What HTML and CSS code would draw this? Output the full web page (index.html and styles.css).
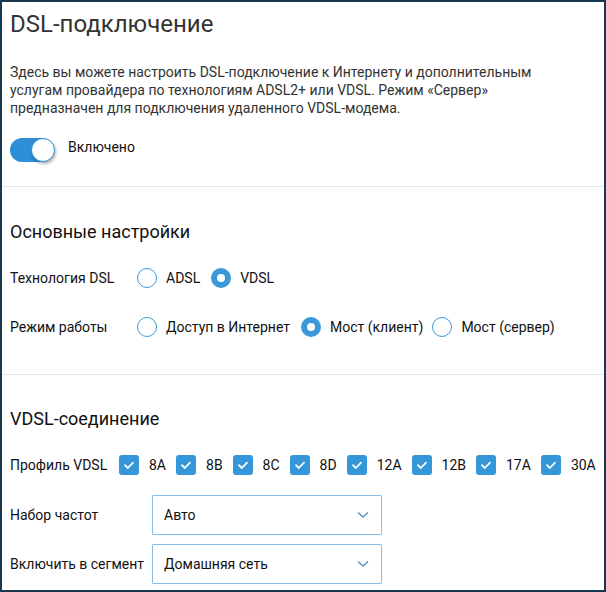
FILE: index.html
```html
<!DOCTYPE html>
<html lang="ru">
<head>
<meta charset="utf-8">
<link rel="stylesheet" href="styles.css">
</head>
<body>
<div class="frame">
  <section class="intro">
    <h1 class="title">DSL-подключение</h1>
    <p class="desc">Здесь вы можете настроить DSL-подключение к Интернету и дополнительным<br>услугам провайдера по технологиям ADSL2+ или VDSL. Режим «Сервер»<br>предназначен для подключения удаленного VDSL-модема.</p>
    <div class="switch-row">
      <span class="switch"><span class="knob"></span></span>
      <span class="switch-label">Включено</span>
    </div>
  </section>
  <section class="sec sec-basic">
    <h2 class="sec-title">Основные настройки</h2>
    <div class="row row-tech">
      <span class="row-label w-basic">Технология DSL</span>
      <span class="opt"><span class="radio"></span><span class="opt-text">ADSL</span></span>
      <span class="opt"><span class="radio on"></span><span class="opt-text">VDSL</span></span>
    </div>
    <div class="row row-mode">
      <span class="row-label w-basic">Режим работы</span>
      <span class="opt"><span class="radio"></span><span class="opt-text">Доступ в Интернет</span></span>
      <span class="opt"><span class="radio on"></span><span class="opt-text">Мост (клиент)</span></span>
      <span class="opt"><span class="radio"></span><span class="opt-text">Мост (сервер)</span></span>
    </div>
  </section>
  <section class="sec sec-vdsl">
    <h2 class="sec-title">VDSL-соединение</h2>
    <div class="row row-profile">
      <span class="row-label w-profile">Профиль VDSL</span>
      <span class="chk-opt"><span class="chk"><svg viewBox="0 0 20 20" width="20" height="20"><path d="M6 10.2 L8.8 13 L14 7.6" fill="none" stroke="#fff" stroke-width="1.8" stroke-linecap="round" stroke-linejoin="round"/></svg></span><span class="chk-text">8A</span></span>
      <span class="chk-opt"><span class="chk"><svg viewBox="0 0 20 20" width="20" height="20"><path d="M6 10.2 L8.8 13 L14 7.6" fill="none" stroke="#fff" stroke-width="1.8" stroke-linecap="round" stroke-linejoin="round"/></svg></span><span class="chk-text">8B</span></span>
      <span class="chk-opt"><span class="chk"><svg viewBox="0 0 20 20" width="20" height="20"><path d="M6 10.2 L8.8 13 L14 7.6" fill="none" stroke="#fff" stroke-width="1.8" stroke-linecap="round" stroke-linejoin="round"/></svg></span><span class="chk-text">8C</span></span>
      <span class="chk-opt"><span class="chk"><svg viewBox="0 0 20 20" width="20" height="20"><path d="M6 10.2 L8.8 13 L14 7.6" fill="none" stroke="#fff" stroke-width="1.8" stroke-linecap="round" stroke-linejoin="round"/></svg></span><span class="chk-text">8D</span></span>
      <span class="chk-opt"><span class="chk"><svg viewBox="0 0 20 20" width="20" height="20"><path d="M6 10.2 L8.8 13 L14 7.6" fill="none" stroke="#fff" stroke-width="1.8" stroke-linecap="round" stroke-linejoin="round"/></svg></span><span class="chk-text">12A</span></span>
      <span class="chk-opt"><span class="chk"><svg viewBox="0 0 20 20" width="20" height="20"><path d="M6 10.2 L8.8 13 L14 7.6" fill="none" stroke="#fff" stroke-width="1.8" stroke-linecap="round" stroke-linejoin="round"/></svg></span><span class="chk-text">12B</span></span>
      <span class="chk-opt"><span class="chk"><svg viewBox="0 0 20 20" width="20" height="20"><path d="M6 10.2 L8.8 13 L14 7.6" fill="none" stroke="#fff" stroke-width="1.8" stroke-linecap="round" stroke-linejoin="round"/></svg></span><span class="chk-text">17A</span></span>
      <span class="chk-opt"><span class="chk"><svg viewBox="0 0 20 20" width="20" height="20"><path d="M6 10.2 L8.8 13 L14 7.6" fill="none" stroke="#fff" stroke-width="1.8" stroke-linecap="round" stroke-linejoin="round"/></svg></span><span class="chk-text">30A</span></span>
    </div>
    <div class="row row-select">
      <span class="row-label w-select">Набор частот</span>
      <div class="select"><span class="select-text">Авто</span><svg class="chev" viewBox="0 0 12 8" width="12" height="8"><path d="M1 1.5 L6 6 L11 1.5" fill="none" stroke="#5a8fc8" stroke-width="1.5"/></svg></div>
    </div>
    <div class="row row-select row-select2">
      <span class="row-label w-select">Включить в сегмент</span>
      <div class="select"><span class="select-text">Домашняя сеть</span><svg class="chev" viewBox="0 0 12 8" width="12" height="8"><path d="M1 1.5 L6 6 L11 1.5" fill="none" stroke="#5a8fc8" stroke-width="1.5"/></svg></div>
    </div>
  </section>
</div>
</body>
</html>
```
FILE: styles.css
```css
* { box-sizing: border-box; }
html, body { margin: 0; padding: 0; }
body {
  font-family: Roboto, "Liberation Sans", sans-serif;
  color: #111;
  background: #fff;
}
.frame {
  width: 606px;
  height: 592px;
  border: 2px solid #17384f;
  overflow: hidden;
}
.intro { padding: 8px 8px 24px; border-bottom: 1px solid #dfe9ef; }
.title {
  margin: 0;
  font-size: 24px;
  line-height: 28px;
  font-weight: 400;
  color: #333;
}
.desc {
  margin: 25px 0 0;
  font-size: 14px;
  line-height: 18px;
  color: #333;
}
.switch-row {
  display: flex;
  align-items: center;
  margin-top: 21px;
  height: 24px;
}
.switch {
  position: relative;
  width: 44px;
  height: 24px;
  border-radius: 12px;
  background: #2f8fd6;
}
.knob {
  position: absolute;
  right: -1px;
  top: 0;
  width: 24px;
  height: 24px;
  border-radius: 50%;
  background: #fff;
  border: 1px solid #2f8fd6;
  box-shadow: 1px 2px 3px rgba(0,0,0,0.3);
}
.switch-label { margin-left: 14px; font-size: 14px; margin-top: -6px; }
.sec { padding: 0 8px; }
.sec-basic { border-bottom: 1px solid #dfe9ef; padding-top: 34px; padding-bottom: 37px; }
.sec-vdsl { padding-top: 33px; }
.sec-title {
  margin: 0;
  font-size: 18px;
  line-height: 22px;
  font-weight: 400;
  color: #111;
}
.row { display: flex; align-items: center; height: 20px; font-size: 14px; }
.row-tech { margin-top: 25px; }
.row-mode { margin-top: 29px; }
.row-profile { margin-top: 25px; }
.row-label { flex: none; }
.w-basic { width: 127px; }
.w-profile { width: 109px; }
.w-select { width: 142px; }
.opt { display: flex; align-items: center; margin-right: 11px; }
.opt:nth-child(3) { margin-right: 9px; }
.radio {
  width: 20px;
  height: 20px;
  border-radius: 50%;
  border: 1.5px solid #3a9ad9;
  background: #fff;
}
.radio.on { border: 6px solid #3a9ad9; }
.opt-text { margin-left: 9px; }
.chk-opt { display: flex; align-items: center; margin-right: 10px; }
.chk {
  width: 20px;
  height: 20px;
  border-radius: 3px;
  background: #3597d9;
  display: flex;
}
.chk-text { margin-left: 10px; }
.row-select { height: 40px; margin-top: 20px; }
.row-select2 { margin-top: 9px; }
.select {
  width: 230px;
  height: 40px;
  border: 1px solid #86c0ea;
  border-radius: 1px;
  display: flex;
  align-items: center;
  justify-content: space-between;
  padding: 0 12px 0 11px;
  font-size: 14px;
}
.chev { display: block; }
```
